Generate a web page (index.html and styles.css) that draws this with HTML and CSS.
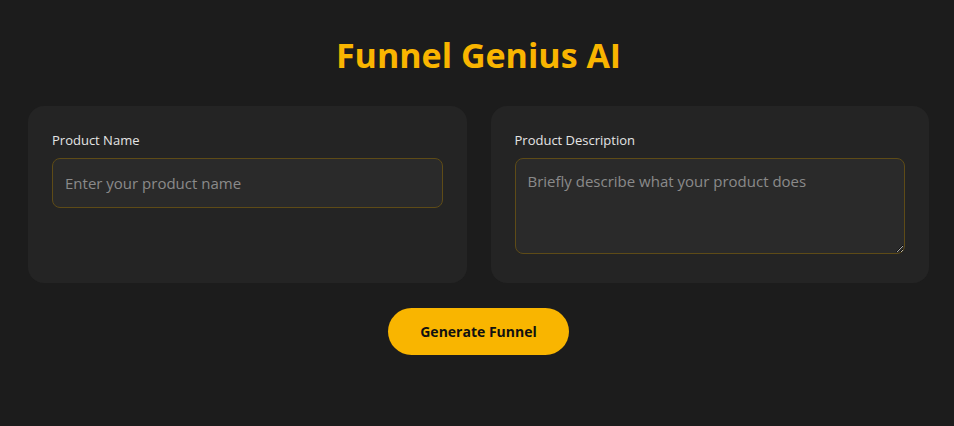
FILE: index.html
```html
<!DOCTYPE html>
<html lang="en">
<head>
<meta charset="utf-8">
<title>Funnel Genius AI</title>
<link rel="stylesheet" href="styles.css">
</head>
<body>
<main class="page">
  <h1 class="title">Funnel Genius AI</h1>
  <div class="cards">
    <section class="card">
      <label class="label" for="name">Product Name</label>
      <input class="field" id="name" type="text" placeholder="Enter your product name">
    </section>
    <section class="card">
      <label class="label" for="desc">Product Description</label>
      <textarea class="field area" id="desc" placeholder="Briefly describe what your product does"></textarea>
    </section>
  </div>
  <div class="actions">
    <button class="btn" type="button">Generate Funnel</button>
  </div>
</main>
</body>
</html>
```
FILE: styles.css
```css
* { box-sizing: border-box; }
html, body { margin: 0; padding: 0; }
body {
  background: #1c1c1c;
  color: #e6e6e6;
  font-family: "Open Sans", "Noto Sans", sans-serif;
}
.page {
  padding: 30px 25px 40px 28px;
}
.title {
  margin: 0 0 26px;
  text-align: center;
  color: #f9b500;
  font-size: 34px;
  font-weight: 700;
  line-height: 50px;
}
.cards {
  display: grid;
  grid-template-columns: 1fr 1fr;
  gap: 24px;
}
.card {
  background: #242424;
  border-radius: 16px;
  padding: 24px;
  min-height: 177px;
  display: flex;
  flex-direction: column;
  align-items: stretch;
}
.label {
  font-size: 13px;
  line-height: 20px;
  margin-bottom: 8px;
  color: #e4e4e4;
}
.field {
  width: 100%;
  height: 50px;
  background: #2a2a2a;
  border: 1px solid #5e4b17;
  border-radius: 8px;
  padding: 12px;
  font-family: inherit;
  font-size: 15px;
  color: #ddd;
  outline: none;
}
.field::placeholder { color: #8a8a8a; }
.area {
  height: 96px;
  resize: vertical;
}
.actions {
  display: flex;
  justify-content: center;
  margin-top: 25px;
}
.btn {
  background: #f9b500;
  color: #111;
  border: none;
  border-radius: 999px;
  height: 47px;
  padding: 0 32px;
  font-family: inherit;
  font-size: 14px;
  font-weight: 700;
  cursor: pointer;
}
```
